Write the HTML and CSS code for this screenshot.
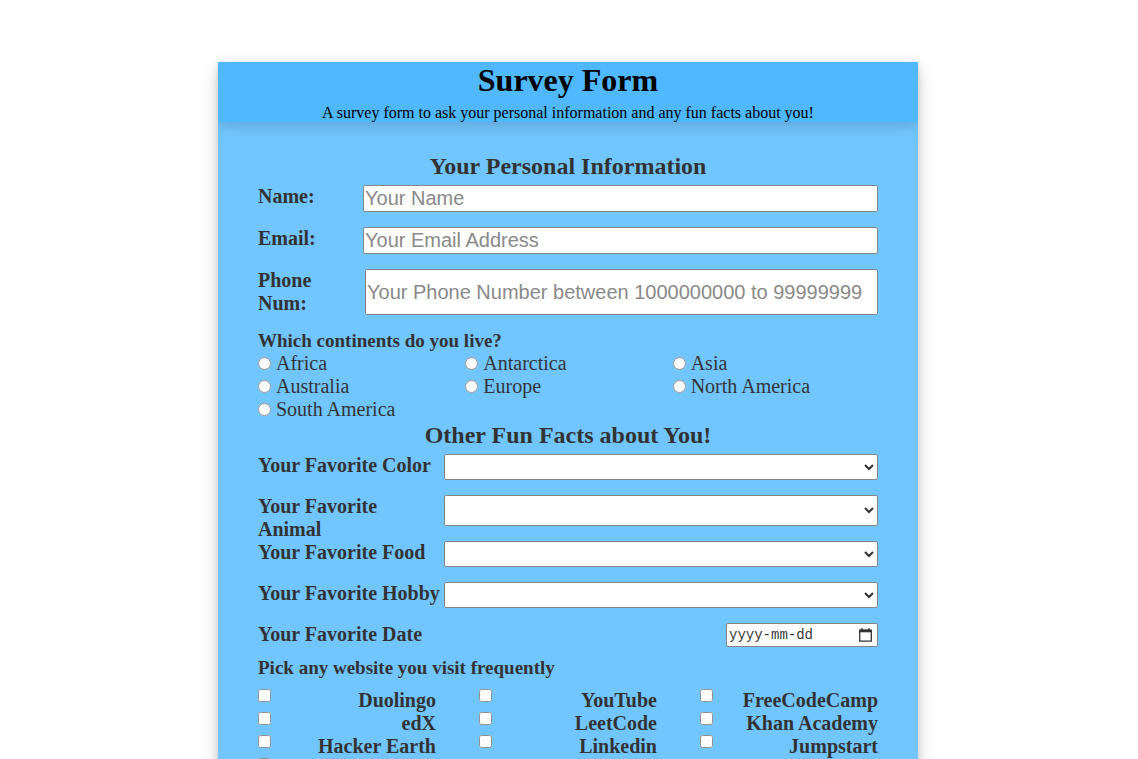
FILE: index.html
```html
<!DOCTYPE html>
<html lang="en">
<head>
<meta charset="utf-8">
<meta name="viewport" content="width=device-width, initial-scale=1">
<title>Survey Form</title>
<link rel="stylesheet" href="styles.css">
</head>
<body>
<main class="card">
  <header class="card-header">
    <h1 class="title">Survey Form</h1>
    <p class="description">A survey form to ask your personal information and any fun facts about you!</p>
  </header>
  <form class="survey">
    <h2 class="section-title">Your Personal Information</h2>
    <div class="row">
      <label class="label" for="name">Name:</label>
      <input class="text-input" id="name" type="text" placeholder="Your Name">
    </div>
    <div class="row">
      <label class="label" for="email">Email:</label>
      <input class="text-input" id="email" type="email" placeholder="Your Email Address">
    </div>
    <div class="row">
      <label class="label" for="phone">Phone<br>Num:</label>
      <input class="text-input phone-input" id="phone" type="tel" placeholder="Your Phone Number between 1000000000 to 99999999">
    </div>
    <fieldset class="group">
      <legend class="question">Which continents do you live?</legend>
      <div class="radios">
        <div class="option"><input class="radio" type="radio" name="continent" id="africa"><label for="africa">Africa</label></div>
        <div class="option"><input class="radio" type="radio" name="continent" id="antarctica"><label for="antarctica">Antarctica</label></div>
        <div class="option"><input class="radio" type="radio" name="continent" id="asia"><label for="asia">Asia</label></div>
        <div class="option"><input class="radio" type="radio" name="continent" id="australia"><label for="australia">Australia</label></div>
        <div class="option"><input class="radio" type="radio" name="continent" id="europe"><label for="europe">Europe</label></div>
        <div class="option"><input class="radio" type="radio" name="continent" id="north-america"><label for="north-america">North America</label></div>
        <div class="option"><input class="radio" type="radio" name="continent" id="south-america"><label for="south-america">South America</label></div>
      </div>
    </fieldset>
    <h2 class="section-title">Other Fun Facts about You!</h2>
    <div class="pick">
      <label class="label" for="color">Your Favorite Color</label>
      <select class="select" id="color"><option></option></select>
    </div>
    <div class="pick">
      <label class="label" for="animal">Your Favorite<br>Animal</label>
      <select class="select" id="animal"><option></option></select>
    </div>
    <div class="pick">
      <label class="label" for="food">Your Favorite Food</label>
      <select class="select" id="food"><option></option></select>
    </div>
    <div class="pick">
      <label class="label" for="hobby">Your Favorite Hobby</label>
      <select class="select" id="hobby"><option></option></select>
    </div>
    <div class="date-row">
      <label class="label" for="date">Your Favorite Date</label>
      <div class="date-box">
        <input class="date-input" id="date" type="text" placeholder="yyyy-mm-dd">
        <button class="calendar" type="button" aria-label="Open calendar">
          <svg width="13" height="14" viewBox="0 0 13 14" fill="none" stroke="#000" stroke-linejoin="round"><path d="M.7 2.2h11.6v11H.7z" stroke-width="1.3"/><path d="M.7 3h11.6" stroke-width="2.6"/><path d="M3 0v2M10 0v2" stroke-width="1.3"/></svg>
        </button>
      </div>
    </div>
    <fieldset class="group">
      <legend class="question">Pick any website you visit frequently</legend>
      <div class="checks">
        <div class="check"><input class="checkbox" type="checkbox" id="duolingo"><label for="duolingo">Duolingo</label></div>
        <div class="check"><input class="checkbox" type="checkbox" id="youtube"><label for="youtube">YouTube</label></div>
        <div class="check"><input class="checkbox" type="checkbox" id="fcc"><label for="fcc">FreeCodeCamp</label></div>
        <div class="check"><input class="checkbox" type="checkbox" id="edx"><label for="edx">edX</label></div>
        <div class="check"><input class="checkbox" type="checkbox" id="leetcode"><label for="leetcode">LeetCode</label></div>
        <div class="check"><input class="checkbox" type="checkbox" id="khan"><label for="khan">Khan Academy</label></div>
        <div class="check"><input class="checkbox" type="checkbox" id="hackerearth"><label for="hackerearth">Hacker Earth</label></div>
        <div class="check"><input class="checkbox" type="checkbox" id="linkedin"><label for="linkedin">Linkedin</label></div>
        <div class="check"><input class="checkbox" type="checkbox" id="jumpstart"><label for="jumpstart">Jumpstart</label></div>
        <div class="check"><input class="checkbox" type="checkbox" aria-label="Another website"></div>
      </div>
    </fieldset>
  </form>
</main>
</body>
</html>
```
FILE: styles.css
```css
* {
  box-sizing: border-box;
  margin: 0;
  padding: 0;
}

body {
  height: 100vh;
  overflow: hidden;
  padding: 62px 2px 0 0;
  background: #fff;
  color: #000;
  font-family: "Liberation Serif", "Times New Roman", serif;
}

.card {
  max-width: 700px;
  margin: 0 auto;
  overflow: hidden;
  box-shadow: 0 4px 8px rgba(0, 0, 0, 0.16), 0 6px 20px rgba(0, 0, 0, 0.14);
}

.card-header {
  position: relative;
  z-index: 1;
  background: #4fb8ff;
  text-align: center;
  box-shadow: 0 4px 8px rgba(0, 0, 0, 0.08), 0 6px 20px rgba(0, 0, 0, 0.08);
}

.title {
  margin-bottom: 5px;
  font-size: 32px;
  line-height: 37px;
}

.description {
  font-size: 16px;
  line-height: 18px;
}

.survey {
  padding: 31px 40px;
  background: #4fb8ff;
  opacity: 0.8;
  font-size: 20px;
  line-height: 23px;
}

.section-title {
  margin-bottom: 5px;
  font-size: 24px;
  line-height: 27px;
  text-align: center;
}

.row {
  display: flex;
  justify-content: space-between;
  margin-bottom: 15px;
}

.label {
  font-weight: bold;
}

.text-input,
.select,
.date-box {
  border: 1px solid #676767;
  border-radius: 2px;
  background-color: #fff;
}

.text-input {
  width: 515px;
  padding: 1px;
  font-family: "Liberation Sans", Arial, sans-serif;
  font-size: 20px;
  line-height: 23px;
}

.phone-input {
  width: 513px;
}

.text-input::placeholder {
  color: #6c6c6c;
}

.group {
  min-width: 0;
  border: 0;
}

.question {
  font-size: 19px;
  font-weight: bold;
  line-height: 22px;
}

.radios {
  display: grid;
  grid-template-columns: repeat(3, 1fr);
  column-gap: 2px;
  margin-bottom: 1px;
}

.option {
  display: flex;
  align-items: center;
  gap: 5px;
}

.radio,
.checkbox {
  width: 13px;
  height: 13px;
}

.pick {
  display: grid;
  grid-template-columns: 3fr 7fr;
  min-height: 41px;
}

.select {
  margin-bottom: 15px;
  font-size: 16px;
}

.date-row {
  display: flex;
  align-items: flex-start;
  justify-content: space-between;
  margin-bottom: 10px;
}

.date-box {
  display: flex;
  align-items: center;
  width: 152px;
  height: 24px;
  padding: 0 5px 0 2px;
}

.date-input {
  flex: 1;
  min-width: 0;
  border: 0;
  background: none;
  font-family: "Liberation Mono", "Courier New", monospace;
  font-size: 14px;
}

.date-input::placeholder {
  color: #000;
}

.calendar {
  display: flex;
  border: 0;
  background: none;
}

.checks {
  display: grid;
  grid-template-columns: repeat(3, 1fr);
  column-gap: 43px;
  margin-top: 10px;
}

.check {
  display: flex;
  align-items: flex-start;
  justify-content: space-between;
  font-weight: bold;
}
```
